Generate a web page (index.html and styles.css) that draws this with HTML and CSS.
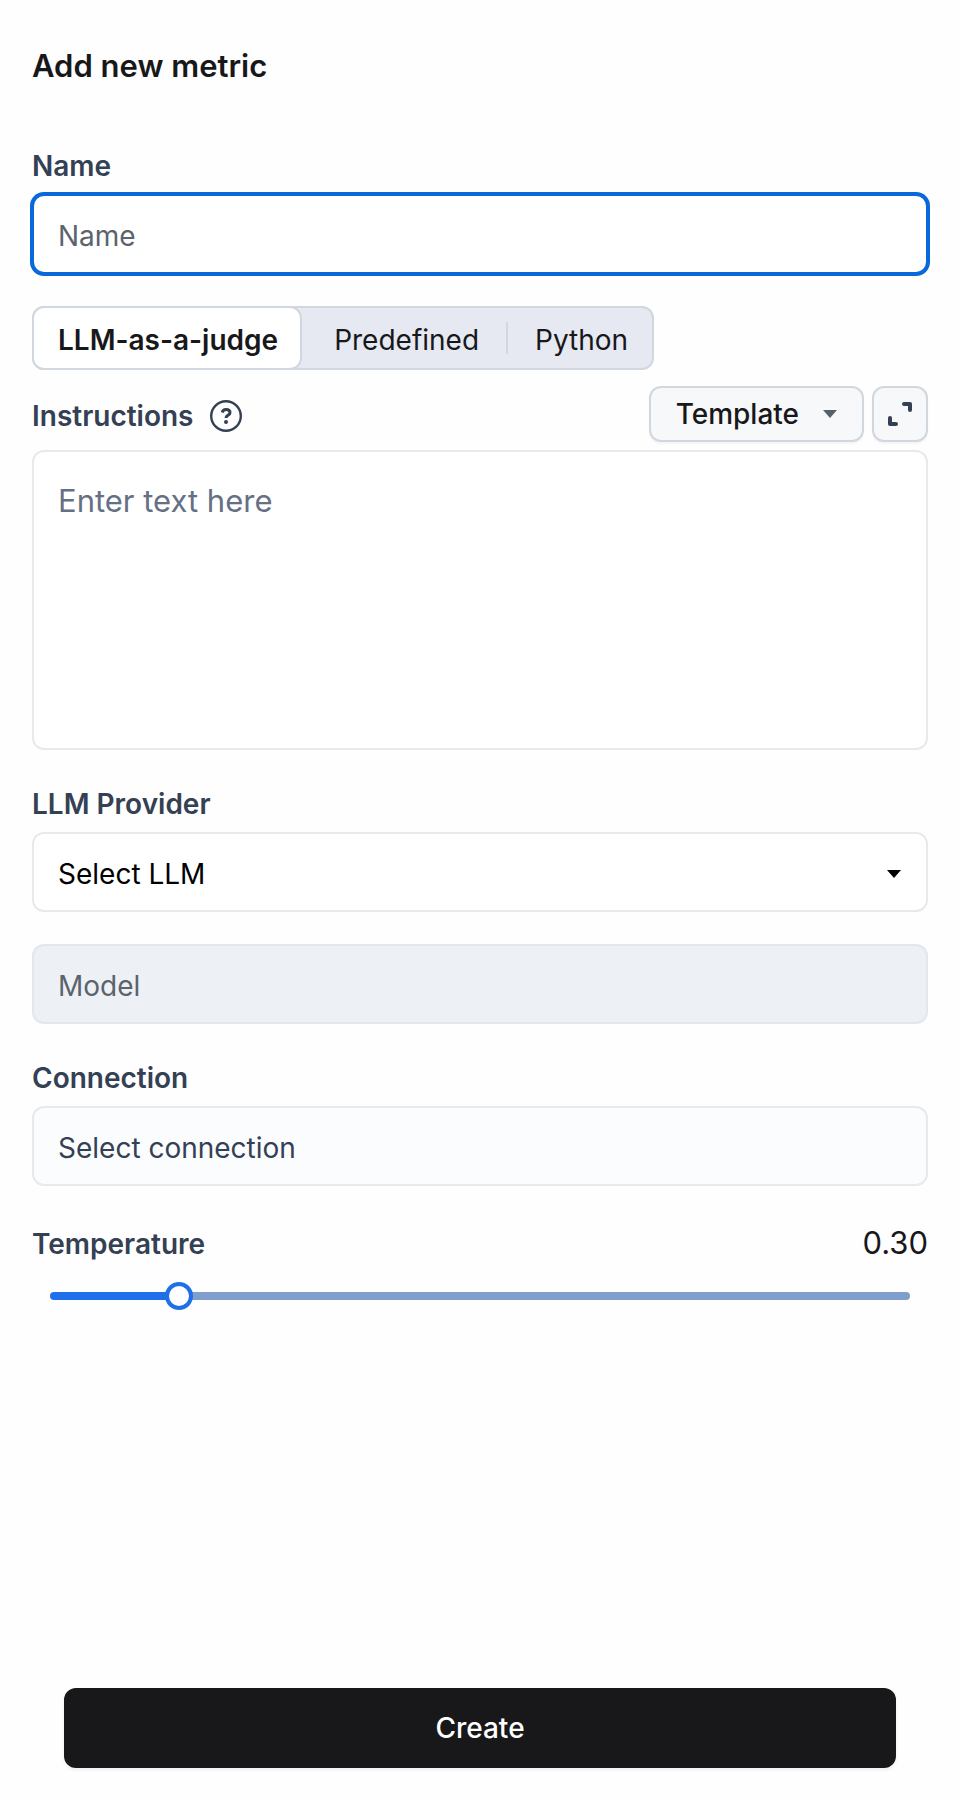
FILE: index.html
```html
<!DOCTYPE html>
<html lang="en">
<head>
<meta charset="UTF-8">
<meta name="viewport" content="width=device-width, initial-scale=1.0">
<title>Add new metric</title>
<link rel="stylesheet" href="styles.css">
</head>

<body>

<form class="metric-form">
    <h1>Add new metric</h1>

    <div class="field">
        <label for="name">Name</label>
        <input type="text" id="name" class="control active" placeholder="Name">
    </div>

    <div class="tabs">
        <button type="button" class="tab selected">LLM-as-a-judge</button>
        <button type="button" class="tab">Predefined</button>
        <button type="button" class="tab divided">Python</button>
    </div>

    <div class="toolbar">
        <label for="instructions">Instructions</label>
        <svg class="help" viewBox="0 0 32 32" fill="none" stroke="currentColor">
            <circle cx="16" cy="16" r="14.8" stroke-width="2.4"/>
            <path d="M12.2 12.500c.5-1.900 1.900-2.900 3.900-2.900 2.300 0 3.900 1.200 3.900 3.100 0 2.600-4 2.700-4 5.300" stroke-width="3"/>
            <circle cx="16" cy="22" r="2" fill="currentColor" stroke="none"/>
        </svg>
        <button type="button" class="small-button template">
            Template
            <svg class="caret" viewBox="0 0 14 8"><path d="M0 0h14L7 8z" fill="#57606a"/></svg>
        </button>
        <button type="button" class="small-button expand" aria-label="Expand">
            <svg viewBox="0 0 24 24" fill="none" stroke="#344054" stroke-width="4" stroke-linecap="round" stroke-linejoin="round">
                <path d="M16 2h6v6M2 16v6h6"/>
            </svg>
        </button>
    </div>
    <textarea id="instructions" class="control" placeholder="Enter text here"></textarea>

    <div class="field">
        <label for="provider">LLM Provider</label>
        <div class="select-box">
            <select id="provider" class="control">
                <option>Select LLM</option>
            </select>
            <svg class="caret" viewBox="0 0 14 8"><path d="M0 0h14L7 8z"/></svg>
        </div>
        <input type="text" class="control model" placeholder="Model" aria-label="Model" disabled>
    </div>

    <div class="field">
        <label for="connection">Connection</label>
        <select id="connection" class="control" disabled>
            <option>Select connection</option>
        </select>
    </div>

    <div class="temperature">
        <label for="temperature">Temperature</label>
        <output id="temperatureValue" for="temperature">0.30</output>
    </div>
    <div class="slider" id="slider">
        <input type="range" id="temperature" min="0" max="2" step="0.01" value="0.3">
    </div>

    <button type="submit" class="create">Create</button>
</form>

<script>
const slider = document.getElementById('slider');
const temperature = document.getElementById('temperature');
const temperatureValue = document.getElementById('temperatureValue');

temperature.addEventListener('input', () => {
    temperatureValue.textContent = Number(temperature.value).toFixed(2);
    slider.style.setProperty('--fill', `${temperature.value / temperature.max * 100}%`);
});
</script>
</body>
</html>
```
FILE: styles.css
```css
* {
    box-sizing: border-box;
}

body {
    margin: 0;
    background-color: #fefefe;
    color: #18181b;
    font-family: Inter, "Liberation Sans", sans-serif;
    font-size: 28px;
    line-height: 36px;
}

button,
input,
select,
textarea {
    margin: 0;
    font: inherit;
    color: inherit;
}

button {
    cursor: pointer;
}

.metric-form {
    display: flex;
    flex-direction: column;
    min-height: 100vh;
    padding: 46px 32px 32px;
}

h1 {
    margin: 0 0 58px;
    font-size: 31px;
    line-height: 40px;
    font-weight: 600;
}

label {
    color: #344054;
    font-weight: 600;
}

.field {
    display: flex;
    flex-direction: column;
    margin-bottom: 32px;
}

.field label {
    margin: 4px 0 10px;
}

.control {
    display: block;
    width: 100%;
    height: 80px;
    padding: 4px 24px 0;
    border: 2px solid #e8e9ed;
    border-radius: 12px;
    background-color: #fff;
    appearance: none;
    outline: none;
}

.control::placeholder {
    color: #5b636d;
    opacity: 1;
}

.control.active {
    border-color: #0969da;
    box-shadow: 0 0 0 2px #0969da;
}

.tabs {
    display: flex;
    align-self: flex-start;
    height: 64px;
    margin-bottom: 16px;
    border: 2px solid #d0d7de;
    border-radius: 12px;
    background-color: #e6e9f1;
}

.tab {
    position: relative;
    padding: 4px 24px 0 32px;
    border: 0;
    background: none;
}

.tab.selected {
    margin: -2px 0 -2px -2px;
    padding: 4px 22px 0 24px;
    border: 2px solid #d0d7de;
    border-radius: 12px;
    background-color: #fff;
    font-weight: 600;
}

.tab.divided::before {
    content: '';
    position: absolute;
    left: 3px;
    top: 14px;
    width: 2px;
    height: 32px;
    background: #d0d7de;
}

.toolbar {
    display: flex;
    align-items: center;
    gap: 8px;
    margin-bottom: 8px;
}

.toolbar label {
    padding-top: 4px;
}

.help {
    width: 32px;
    height: 32px;
    margin: 4px auto 0 8px;
    color: #344054;
}

.small-button {
    display: flex;
    align-items: center;
    justify-content: center;
    height: 56px;
    border: 2px solid #d0d7de;
    border-radius: 12px;
    background-color: #f6f8fa;
    box-shadow: 0 2px 2px rgba(31, 35, 40, 0.04);
}

.template {
    gap: 24px;
    padding: 0 25px;
    font-weight: 500;
}

.expand {
    width: 56px;
    padding: 0;
}

.expand svg {
    width: 24px;
    height: 24px;
}

.caret {
    width: 14px;
    height: 8px;
}

textarea.control {
    height: 300px;
    margin-bottom: 32px;
    padding: 29px 24px;
    font-size: 31px;
    line-height: 40px;
    resize: none;
}

textarea.control::placeholder {
    color: #667085;
}

.select-box {
    position: relative;
    color: #000;
}

.select-box .caret {
    position: absolute;
    right: 27px;
    top: 38px;
    pointer-events: none;
}

.control:disabled {
    opacity: 1;
    background-color: #fbfcfe;
    color: #344054;
}

.control.model {
    margin-top: 32px;
    background-color: #edf1f5;
    border-color: #e3e7eb;
}

.temperature {
    display: flex;
    justify-content: space-between;
    align-items: baseline;
    margin-top: 7px;
}

.temperature output {
    font-size: 31px;
}

.slider {
    --fill: 15%;
    position: relative;
    height: 28px;
    margin: 20px 4px 32px;
}

.slider::before {
    content: '';
    position: absolute;
    left: 14px;
    right: 14px;
    top: 10px;
    height: 8px;
    border-radius: 4px;
    background: linear-gradient(to right, #1f6feb var(--fill), #7f9ecb var(--fill));
}

.slider input {
    position: relative;
    display: block;
    width: 100%;
    height: 28px;
    background: none;
    appearance: none;
}

.slider input::-webkit-slider-thumb {
    width: 28px;
    height: 28px;
    border: 4px solid #1f6feb;
    border-radius: 50%;
    background: #fff;
    appearance: none;
}

.create {
    height: 80px;
    margin: auto 32px 0;
    border: 0;
    border-radius: 12px;
    background-color: #18181a;
    box-shadow: 0 2px 4px rgba(0, 0, 0, 0.06);
    color: #fff;
    font-weight: 500;
}
```
